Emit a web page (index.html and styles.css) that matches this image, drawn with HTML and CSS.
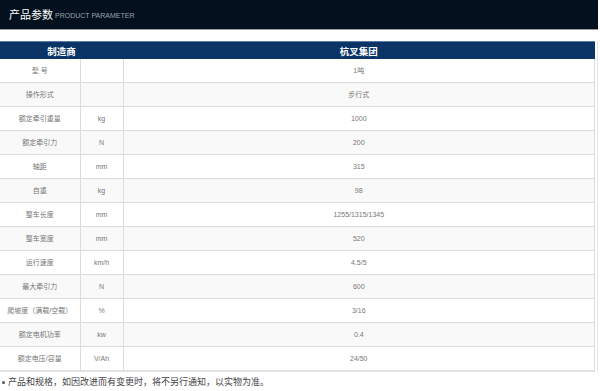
FILE: index.html
```html
<!DOCTYPE html>
<html lang="zh-CN">
<head>
<meta charset="utf-8">
<title>产品参数</title>
<link rel="stylesheet" href="styles.css">
</head>
<body>
<div class="page">
  <div class="title-bar">
    <span class="title-cn">产品参数</span>
    <span class="title-en">PRODUCT PARAMETER</span>
  </div>
  <div class="table-wrap">
    <table class="params">
      <colgroup>
        <col class="col-name">
        <col class="col-unit">
        <col class="col-value">
      </colgroup>
      <thead>
        <tr>
          <th colspan="2">制造商</th>
          <th>杭叉集团</th>
        </tr>
      </thead>
      <tbody>
        <tr><td>型 号</td><td></td><td>1吨</td></tr>
        <tr><td>操作形式</td><td></td><td>步行式</td></tr>
        <tr><td>额定牵引重量</td><td>kg</td><td>1000</td></tr>
        <tr><td>额定牵引力</td><td>N</td><td>200</td></tr>
        <tr><td>轴距</td><td>mm</td><td>315</td></tr>
        <tr><td>自重</td><td>kg</td><td>98</td></tr>
        <tr><td>整车长度</td><td>mm</td><td>1255/1315/1345</td></tr>
        <tr><td>整车宽度</td><td>mm</td><td>520</td></tr>
        <tr><td>运行速度</td><td>km/h</td><td>4.5/5</td></tr>
        <tr><td>最大牵引力</td><td>N</td><td>600</td></tr>
        <tr><td>爬坡度（满载/空载）</td><td>%</td><td>3/16</td></tr>
        <tr><td>额定电机功率</td><td>kw</td><td>0.4</td></tr>
        <tr><td>额定电压/容量</td><td>V/Ah</td><td>24/50</td></tr>
      </tbody>
    </table>
  </div>
  <p class="note">产品和规格，如因改进而有变更时，将不另行通知，以实物为准。</p>
</div>
</body>
</html>
```

FILE: styles.css
```css
html, body {
  margin: 0;
  padding: 0;
  background: #ffffff;
}
body {
  font-family: "Liberation Sans", "Noto Sans CJK SC", sans-serif;
  color: #777;
}
.page {
  width: 600px;
}
.title-bar {
  width: 598px;
  height: 30px;
  background: #03111f;
  border-bottom: 1px solid #9a9a9a;
  display: flex;
  align-items: center;
  padding-left: 9px;
  box-sizing: border-box;
  gap: 2px;
}
.title-cn {
  color: #ffffff;
  font-family: "Noto Sans CJK SC", sans-serif;
  font-size: 11px;
  line-height: 1;
}
.title-en {
  color: #9aa3ad;
  font-size: 7px;
  line-height: 1;
  padding-top: 2px;
}
.table-wrap {
  margin-top: 11px;
  width: 598px;
  border-right: 1px solid #e6e6e6;
  box-sizing: border-box;
  padding-right: 2px;
}
.params {
  width: 100%;
  border-collapse: collapse;
  table-layout: fixed;
}
.col-name {
  width: 80px;
}
.col-unit {
  width: 43px;
}
.params th {
  background: #0a3466;
  border-top: 1px solid #5a7ea6;
  color: #ffffff;
  font-family: "Noto Sans CJK SC", sans-serif;
  font-size: 9.5px;
  font-weight: bold;
  height: 17px;
  padding: 0;
  text-align: center;
}
.params td {
  height: 23px;
  padding: 0;
  border-bottom: 1px solid #dcdcdc;
  border-right: 1px solid #dcdcdc;
  text-align: center;
  font-size: 7px;
  color: #777;
  line-height: 1;
  white-space: nowrap;
}
.params tbody tr:nth-child(even) td {
  background: #f9f9f9;
}
.params tbody tr:last-child td {
  border-bottom: 2px solid #e2e2e2;
}
.note {
  margin: 0;
  padding: 4px 0 0 8px;
  font-family: "Noto Sans CJK SC", sans-serif;
  font-size: 9px;
  line-height: 12px;
  color: #444;
  position: relative;
}
.note::before {
  content: "";
  position: absolute;
  left: 2px;
  top: 9px;
  width: 3px;
  height: 3px;
  border-radius: 50%;
  background: #555;
}
```
